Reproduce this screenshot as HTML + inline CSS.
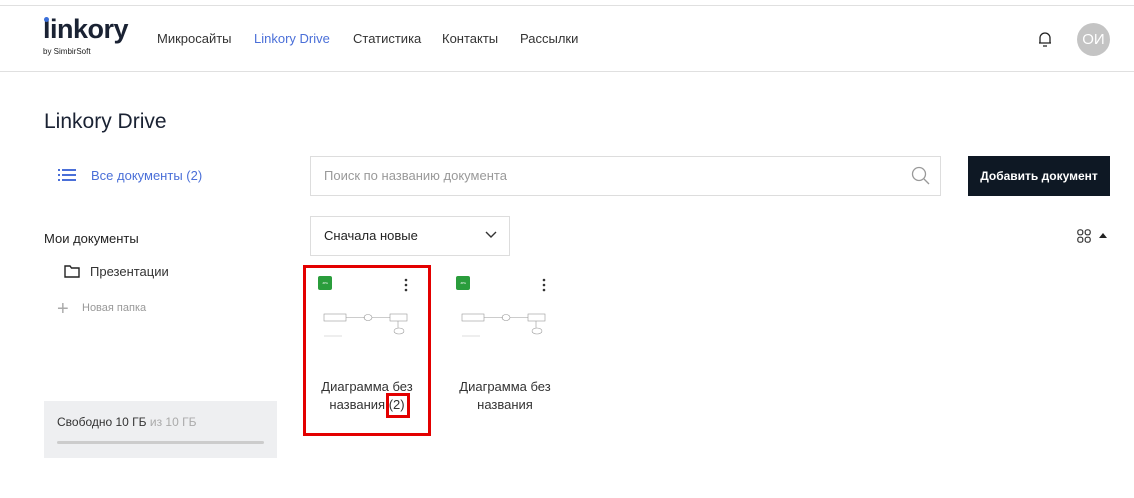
<!DOCTYPE html>
<html><head><meta charset="utf-8"><style>
*{margin:0;padding:0;box-sizing:border-box}
body{width:1134px;height:498px;background:#fff;font-family:"Liberation Sans",sans-serif;color:#222;position:relative;overflow:hidden}
.a{position:absolute;white-space:nowrap}
.nav{font-size:13px;color:#333;top:31px}
</style></head><body>
<div class="a" style="left:0;top:5px;width:1134px;height:1px;background:#e0e0e0"></div>
<div class="a" style="left:0;top:71px;width:1134px;height:1px;background:#e0e0e0"></div>
<div class="a" style="left:43px;top:14px;font-size:27px;font-weight:bold;color:#1a2233;letter-spacing:-0.5px">linkory</div>
<div class="a" style="left:44px;top:17px;width:5px;height:5px;border-radius:50%;background:#3b6fd9"></div>
<div class="a" style="left:43px;top:47px;font-size:8px;color:#222">by SimbirSoft</div>
<div class="a nav" style="left:157px">Микросайты</div>
<div class="a nav" style="left:254px;color:#4a6fd8">Linkory Drive</div>
<div class="a nav" style="left:353px">Статистика</div>
<div class="a nav" style="left:442px">Контакты</div>
<div class="a nav" style="left:520px">Рассылки</div>
<svg class="a" style="left:1036px;top:30px" width="18" height="18" viewBox="0 0 18 18" fill="none" stroke="#222" stroke-width="1.3"><path d="M4 13V8a5 5 0 0 1 10 0v5H4zM3 13h12M7 16h4"/></svg>
<div class="a" style="left:1077px;top:23px;width:33px;height:33px;border-radius:50%;background:#c4c4c4;color:#fff;font-size:15px;text-align:center;line-height:33px">ОИ</div>
<div class="a" style="left:44px;top:110px;font-size:21px;color:#1a2233">Linkory Drive</div>
<svg class="a" style="left:58px;top:168px" width="18" height="14" fill="#4a6fd8"><rect x="0" y="1" width="2" height="2"/><rect x="4" y="1" width="14" height="2"/><rect x="0" y="6" width="2" height="2"/><rect x="4" y="6" width="14" height="2"/><rect x="0" y="11" width="2" height="2"/><rect x="4" y="11" width="14" height="2"/></svg>
<div class="a" style="left:91px;top:168px;font-size:13px;color:#4a6fd8">Все документы (2)</div>
<div class="a" style="left:44px;top:231px;font-size:13px">Мои документы</div>
<svg class="a" style="left:64px;top:264px" width="16" height="14" fill="none" stroke="#222" stroke-width="1.4"><path d="M1 2h5l1.5 2H15v9H1z"/></svg>
<div class="a" style="left:90px;top:264px;font-size:13px;color:#333">Презентации</div>
<div class="a" style="left:57px;top:298px;font-size:20px;color:#aaa;font-weight:300">+</div>
<div class="a" style="left:82px;top:302px;font-size:11px;color:#999">Новая папка</div>
<div class="a" style="left:44px;top:401px;width:233px;height:57px;background:#eeeff1"></div>
<div class="a" style="left:57px;top:415px;font-size:12px;color:#333">Свободно 10 ГБ <span style="color:#aaa">из 10 ГБ</span></div>
<div class="a" style="left:57px;top:441px;width:207px;height:3px;background:#ccc;border-radius:2px"></div>
<div class="a" style="left:310px;top:156px;width:631px;height:40px;border:1px solid #ddd"></div>
<div class="a" style="left:324px;top:168px;font-size:13px;color:#999">Поиск по названию документа</div>
<svg class="a" style="left:911px;top:166px" width="19" height="19" fill="none" stroke="#999" stroke-width="1.3"><circle cx="8" cy="8" r="6.5"/><path d="M13 13l5 5"/></svg>
<div class="a" style="left:968px;top:156px;width:142px;height:40px;background:#0e1824;color:#fff;font-size:12px;font-weight:bold;text-align:center;line-height:40px">Добавить документ</div>
<div class="a" style="left:310px;top:216px;width:200px;height:40px;border:1px solid #ddd"></div>
<div class="a" style="left:324px;top:228px;font-size:13px;color:#222">Сначала новые</div>
<svg class="a" style="left:485px;top:231px" width="12" height="8" fill="none" stroke="#333" stroke-width="1.4"><path d="M1 1l5 5 5-5"/></svg>
<svg class="a" style="left:1077px;top:229px" width="14" height="14" fill="none" stroke="#333" stroke-width="1.2"><rect x="0.8" y="0.8" width="5" height="5" rx="2"/><rect x="8.2" y="0.8" width="5" height="5" rx="2"/><rect x="0.8" y="8.2" width="5" height="5" rx="2"/><rect x="8.2" y="8.2" width="5" height="5" rx="2"/></svg>
<svg class="a" style="left:1099px;top:233px" width="8" height="5" fill="#222"><path d="M0 5L4 0l4 5z"/></svg>
<div class="a" style="left:303px;top:265px;width:128px;height:171px;border:3px solid #e30000"></div>
<div class="a" style="left:386px;top:393px;width:24px;height:25px;border:3px solid #e30000"></div>
<div class="a" style="left:318px;top:276px;width:14px;height:14px;background:#2a9d3c;border-radius:2px;color:#fff;font-size:3px;text-align:center;line-height:14px">JPG</div>
<div class="a" style="left:456px;top:276px;width:14px;height:14px;background:#2a9d3c;border-radius:2px;color:#fff;font-size:3px;text-align:center;line-height:14px">JPG</div>
<svg class="a" style="left:404px;top:278px" width="4" height="14" fill="#333"><circle cx="2" cy="2" r="1.3"/><circle cx="2" cy="7" r="1.3"/><circle cx="2" cy="12" r="1.3"/></svg>
<svg class="a" style="left:542px;top:278px" width="4" height="14" fill="#333"><circle cx="2" cy="2" r="1.3"/><circle cx="2" cy="7" r="1.3"/><circle cx="2" cy="12" r="1.3"/></svg>
<svg class="a" style="left:323px;top:312px" width="88" height="32" fill="none" stroke="#999" stroke-width="0.6"><rect x="1" y="2" width="22" height="7"/><path d="M23 5.5h19"/><ellipse cx="45" cy="5.5" rx="4" ry="3"/><path d="M49 5.5h18"/><rect x="67" y="2" width="17" height="7"/><path d="M75 9v7"/><ellipse cx="76" cy="19" rx="5" ry="3"/><path d="M1 24h18" stroke="#bbb"/></svg>
<svg class="a" style="left:461px;top:312px" width="88" height="32" fill="none" stroke="#999" stroke-width="0.6"><rect x="1" y="2" width="22" height="7"/><path d="M23 5.5h19"/><ellipse cx="45" cy="5.5" rx="4" ry="3"/><path d="M49 5.5h18"/><rect x="67" y="2" width="17" height="7"/><path d="M75 9v7"/><ellipse cx="76" cy="19" rx="5" ry="3"/><path d="M1 24h18" stroke="#bbb"/></svg>
<div class="a" style="left:306px;top:378px;width:122px;text-align:center;font-size:13px;line-height:18px;color:#333;white-space:normal">Диаграмма без названия (2)</div>
<div class="a" style="left:444px;top:378px;width:122px;text-align:center;font-size:13px;line-height:18px;color:#333;white-space:normal">Диаграмма без названия</div>
</body></html>
